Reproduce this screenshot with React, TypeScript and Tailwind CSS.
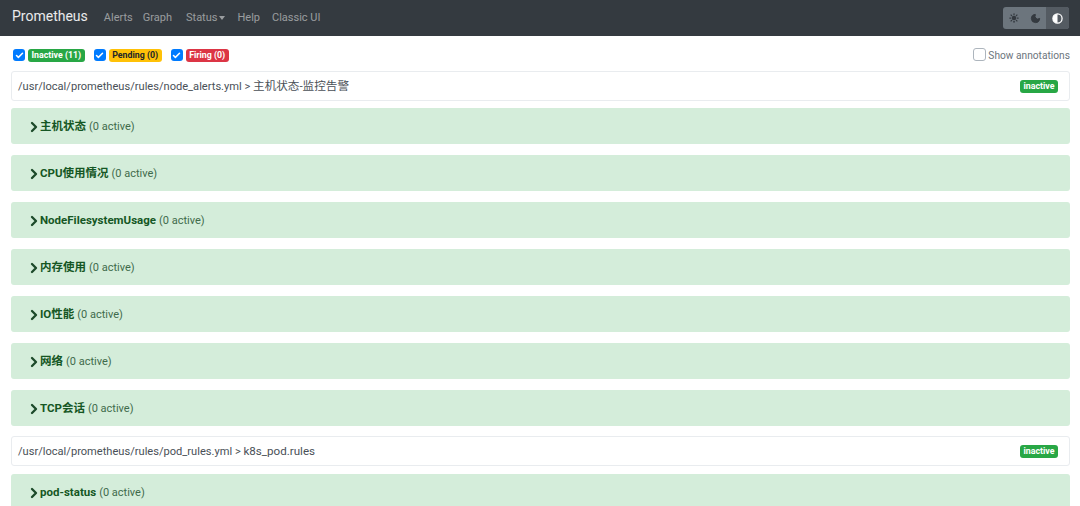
import React from 'react';
import { Check, ChevronRight, Sun, Moon } from 'lucide-react';

const font = "font-['Roboto','Noto_Sans_CJK_SC',sans-serif]";

const Badge = ({ label, color }: { label: string; color: string }) => (
    <span className={`inline-flex h-[13px] items-center rounded-[3px] px-[3.5px] text-[8.8px] font-bold leading-none ${color}`}>
        {label}
    </span>
);

const Filter = ({ label, color }: { label: string; color: string }) => (
    <div className="flex items-center gap-[3px]">
        <span className="flex h-[12px] w-[12px] items-center justify-center rounded-[3px] bg-[#007bff]">
            <Check size={9} strokeWidth={4} className="text-white" />
        </span>
        <Badge label={label} color={color} />
    </div>
);

const GroupHeader = ({ file, name }: { file: string; name: string }) => (
    <div className="flex h-[30px] items-center justify-between rounded-[3px] border border-[#e9ecef] bg-white pl-[6px] pr-[11px] text-[11.1px] text-[#495057]">
        <span className="pt-[1px]">{file} &gt; <span className="text-[11.6px]">{name}</span></span>
        <Badge label="inactive" color="bg-[#28a745] text-white" />
    </div>
);

const Rule = ({ name }: { name: string }) => (
    <div className="flex h-[36px] items-center rounded-[3px] bg-[#d4edda] pl-[15px] pt-[2px] text-[#155724]">
        <ChevronRight size={16} strokeWidth={3.5} className="mb-[1px] mr-[-2px] text-[#1c4a2a]" />
        <span className="text-[11.5px] font-bold">{name}</span>
        <span className="ml-[3px] text-[11px] text-[#3f6b4b]">(0 active)</span>
    </div>
);

const App: React.FC = () => {
    const rules = ['主机状态', 'CPU使用情况', 'NodeFilesystemUsage', '内存使用', 'IO性能', '网络', 'TCP会话'];

    return (
        <div className={`h-[506px] w-[1080px] overflow-hidden bg-white ${font}`}>
            {/* Navbar */}
            <nav className="flex h-[36px] items-center justify-between bg-[#343a40] pl-[12px] pr-[11px]">
                <div className="flex items-center">
                    <span className="mb-[4px] mr-[16px] text-[14px] text-white/90">Prometheus</span>
                    <div className="flex items-center gap-[11px] text-[11px] text-white/50">
                        <span className="mr-[-1px]">Alerts</span>
                        <span className="mr-[3px]">Graph</span>
                        <span className="flex items-center gap-[2px]">
                            Status
                            <span className="h-0 w-0 border-x-[3.5px] border-t-[4px] border-x-transparent border-t-white/50" />
                        </span>
                        <span className="ml-[1px] mr-[1px]">Help</span>
                        <span>Classic UI</span>
                    </div>
                </div>
                <div className="flex h-[22px] items-center overflow-hidden rounded-[3px] bg-[#6c757d]">
                    <span className="flex h-full w-[22px] items-center justify-center">
                        <Sun size={10} strokeWidth={3} fill="#343a40" className="text-[#343a40]" />
                    </span>
                    <span className="flex h-full w-[21px] items-center justify-center">
                        <Moon size={11} fill="#343a40" className="text-[#343a40]" />
                    </span>
                    <span className="flex h-full w-[23px] items-center justify-center bg-[#545b62]">
                        <svg width="11" height="11" viewBox="0 0 12 12">
                            <circle cx="6" cy="6" r="5" fill="none" stroke="white" strokeWidth="1.4" />
                            <path d="M6 1a5 5 0 0 0 0 10z" fill="white" />
                        </svg>
                    </span>
                </div>
            </nav>

            <div className="px-[11px] pr-[10px]">
                {/* Filters */}
                <div className="flex h-[35px] items-center justify-between pl-[2px] pt-[3px]">
                    <div className="flex items-center gap-[9px]">
                        <Filter label="Inactive (11)" color="bg-[#28a745] text-white" />
                        <Filter label="Pending (0)" color="bg-[#ffc107] text-[#212529]" />
                        <Filter label="Firing (0)" color="bg-[#dc3545] text-white" />
                    </div>
                    <div className="flex items-center gap-[2px] text-[10.2px] text-[#6c757d]">
                        <span className="h-[13px] w-[13px] rounded-[3px] border border-[#adb5bd] bg-white" />
                        <span className="pt-[2px]">Show annotations</span>
                    </div>
                </div>

                <GroupHeader file="/usr/local/prometheus/rules/node_alerts.yml" name="主机状态-监控告警" />
                <div className="mt-[7px] flex flex-col gap-[11px]">
                    {rules.map(r => <Rule key={r} name={r} />)}
                </div>

                <div className="mt-[10px]">
                    <GroupHeader file="/usr/local/prometheus/rules/pod_rules.yml" name="k8s_pod.rules" />
                </div>
                <div className="mt-[8px]">
                    <Rule name="pod-status" />
                </div>
            </div>
        </div>
    );
};

export default App;
